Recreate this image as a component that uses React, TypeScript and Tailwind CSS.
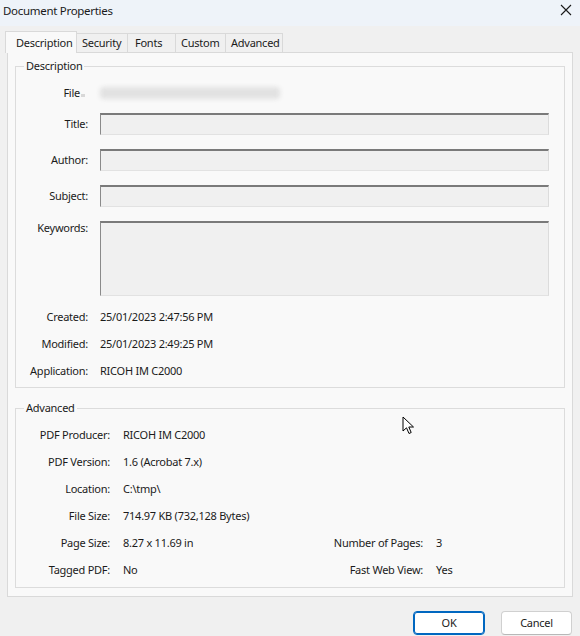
import React from 'react';

const FONT = { fontFamily: '"Noto Sans", "Segoe UI", sans-serif' };

const Field: React.FC<{ label: string; tall?: boolean }> = ({ label, tall }) => (
  <div className={`flex ${tall ? 'items-start' : 'items-center'} mt-[14px]`}>
    <div className={`w-[72px] text-right ${tall ? '-mt-[1px]' : ''}`}>{label}</div>
    <div
      className={`ml-[12px] w-[449px] ${tall ? 'h-[75px]' : 'h-[22px]'} bg-[#f0f0f0] border-t-2 border-l border-r border-b border-t-[#7a7a7a] border-l-[#8a8a8a] border-r-[#dcdcdc] border-b-[#e2e2e2]`}
    />
  </div>
);

const InfoRow: React.FC<{ label: string; value: string; first?: boolean }> = ({ label, value, first }) => (
  <div className={`flex items-center h-[16px] ${first ? 'mt-[13px]' : 'mt-[11px]'}`}>
    <div className="w-[72px] text-right">{label}</div>
    <div className="ml-[12px]">{value}</div>
  </div>
);

const AdvRow: React.FC<{ label: string; value: string; label2?: string; value2?: string }> = ({
  label,
  value,
  label2,
  value2,
}) => (
  <div className="flex items-center h-[16px] mt-[11px]">
    <div className="w-[94px] text-right">{label}</div>
    <div className="ml-[13px] w-[193px]">{value}</div>
    {label2 && (
      <>
        <div className="w-[107px] text-right">{label2}</div>
        <div className="ml-[13px]">{value2}</div>
      </>
    )}
  </div>
);

const tabs = [
  { label: 'Description', w: 'w-[72px]' },
  { label: 'Security', w: 'w-[51px]' },
  { label: 'Fonts', w: 'w-[48px]' },
  { label: 'Custom', w: 'w-[50px]' },
  { label: 'Advanced', w: 'w-[57px]' },
];

export default function App() {
  return (
    <div
      className="relative w-[580px] h-[636px] bg-[#f0f0f0] text-[11px] leading-[16px] tracking-[-0.25px] text-[#1b1b1b] overflow-hidden"
      style={FONT}
    >
      {/* title bar */}
      <div className="h-[26px] bg-[#eef3f9] flex items-center justify-between pl-[3px] pr-[8px]">
        <span className="text-[11.5px] tracking-[-0.3px] text-[#1a1a1a] -mt-[4px]">Document Properties</span>
        <svg width="12" height="12" viewBox="0 0 12 12" className="-mt-[6px]">
          <path d="M1 1 L11 11 M11 1 L1 11" stroke="#1a1a1a" strokeWidth="1.1" />
        </svg>
      </div>

      {/* tabs */}
      <div className="flex items-end h-[26px] pl-[5px]">
        {tabs.map((t, i) =>
          i === 0 ? (
            <div
              key={t.label}
              className={`${t.w} h-[22px] bg-[#f9f9f9] border border-b-0 border-[#d9d9d9] flex items-center pl-[10px] relative z-10 -mb-px`}
            >
              {t.label}
            </div>
          ) : (
            <div
              key={t.label}
              className={`${t.w} h-[19px] bg-[#f0f0f0] border border-l-0 border-b-0 border-[#d9d9d9] flex items-center ${
                t.label === 'Fonts' ? 'pl-[7px]' : 'pl-[5px]'
              } ${i === 1 ? 'border-l' : ''}`}
            >
              {t.label}
            </div>
          )
        )}
      </div>

      {/* tab panel */}
      <div className="mx-[7px] w-[566px] bg-[#f9f9f9] border border-[#d9d9d9] px-[7px] pb-[8px]">
        <fieldset className="mt-[5px] border border-[#dcdcdc] pb-[8px]">
          <legend className="ml-[8px] px-[2px]">Description</legend>
          <div className="flex items-center h-[16px] mt-[11px]">
            <div className="w-[72px] text-right pr-[3px]">
              File<span className="inline-block w-[4px] h-[3px] bg-[#d8d8d8] ml-[1px]" />
            </div>
            <div className="ml-[12px] w-[180px] h-[12px] rounded-sm bg-[#e2e2e2] blur-[2px]" />
          </div>
          <div className="-mt-[2px]">
            <Field label="Title:" />
            <Field label="Author:" />
            <Field label="Subject:" />
            <Field label="Keywords:" tall />
          </div>
          <InfoRow label="Created:" value="25/01/2023 2:47:56 PM" first />
          <InfoRow label="Modified:" value="25/01/2023 2:49:25 PM" />
          <InfoRow label="Application:" value="RICOH IM C2000" />
        </fieldset>

        <fieldset className="mt-[12px] border border-[#dcdcdc] pb-[9px]">
          <legend className="ml-[8px] px-[2px]">Advanced</legend>
          <AdvRow label="PDF Producer:" value="RICOH IM C2000" />
          <AdvRow label="PDF Version:" value="1.6 (Acrobat 7.x)" />
          <AdvRow label="Location:" value="C:\tmp\" />
          <AdvRow label="File Size:" value="714.97 KB (732,128 Bytes)" />
          <AdvRow label="Page Size:" value="8.27 x 11.69 in" label2="Number of Pages:" value2="3" />
          <AdvRow label="Tagged PDF:" value="No" label2="Fast Web View:" value2="Yes" />
        </fieldset>
      </div>

      {/* buttons */}
      <div className="flex justify-end gap-[16px] pr-[8px] mt-[14px]">
        <button className="w-[72px] h-[24px] bg-white border border-[#0067c0] rounded-[4px] text-[#1b1b1b] shadow-[inset_0_0_0_1px_#0067c0]">
          OK
        </button>
        <button className="w-[71px] h-[24px] bg-white border border-[#d0d0d0] border-b-[#b8b8b8] rounded-[4px] text-[#1b1b1b]">
          Cancel
        </button>
      </div>

      {/* mouse cursor */}
      <svg className="absolute left-[402px] top-[416px]" width="14" height="20" viewBox="0 0 14 20">
        <path
          d="M1 1 L1 15 L4.5 11.8 L7 17.5 L9.2 16.5 L6.8 11 L11.5 11 Z"
          fill="#ffffff"
          stroke="#000000"
          strokeWidth="1"
          strokeLinejoin="round"
        />
      </svg>
    </div>
  );
}
